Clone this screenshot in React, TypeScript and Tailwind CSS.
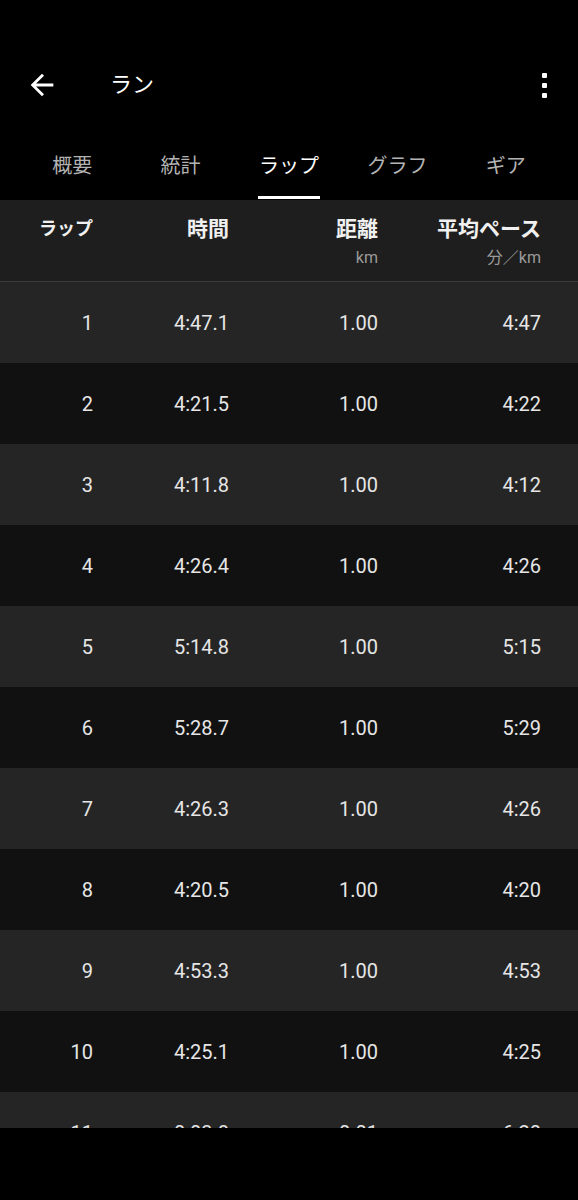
import React from "react";

const rows: [string, string, string, string][] = [
  ["1", "4:47.1", "1.00", "4:47"],
  ["2", "4:21.5", "1.00", "4:22"],
  ["3", "4:11.8", "1.00", "4:12"],
  ["4", "4:26.4", "1.00", "4:26"],
  ["5", "5:14.8", "1.00", "5:15"],
  ["6", "5:28.7", "1.00", "5:29"],
  ["7", "4:26.3", "1.00", "4:26"],
  ["8", "4:20.5", "1.00", "4:20"],
  ["9", "4:53.3", "1.00", "4:53"],
  ["10", "4:25.1", "1.00", "4:25"],
  ["11", "0:03.8", "0.01", "6:20"],
];

const tabs = ["概要", "統計", "ラップ", "グラフ", "ギア"];

export default function App() {
  return (
    <div
      className="w-[578px] h-[1200px] bg-black text-white overflow-hidden"
      style={{ fontFamily: "Roboto, 'Noto Sans CJK JP', sans-serif" }}
    >
      {/* toolbar */}
      <div className="h-[130px] pt-[60px]">
        <div className="flex items-center h-[50px] pl-[25px] pr-[31px]">
          <svg width="34" height="34" viewBox="0 0 24 24" className="shrink-0">
            <path fill="#fff" d="M20 11H7.83l5.59-5.59L12 4l-8 8 8 8 1.41-1.41L7.83 13H20v-2z" />
          </svg>
          <span className="ml-[51px] text-[22px] leading-none text-white">ラン</span>
          <div className="ml-auto flex flex-col gap-[5px]">
            <div className="w-[5px] h-[5px] bg-white rounded-[1px]" />
            <div className="w-[5px] h-[5px] bg-white rounded-[1px]" />
            <div className="w-[5px] h-[5px] bg-white rounded-[1px]" />
          </div>
        </div>
      </div>
      {/* tabs */}
      <div className="grid grid-cols-5 px-[18px] h-[70px]">
        {tabs.map((t, i) => (
          <div key={t} className="relative flex items-center justify-center pt-[2px]">
            <span
              className={
                "text-[20px] leading-none " +
                (i === 2 ? "text-white" : "text-[#b3b3b3]")
              }
            >
              {t}
            </span>
            {i === 2 && (
              <div className="absolute bottom-[1px] left-1/2 -translate-x-1/2 w-[62px] h-[3px] bg-white" />
            )}
          </div>
        ))}
      </div>
      {/* table */}
      <div className="h-[928px] overflow-hidden">
        <div className="bg-[#1e1e1e] h-[82px] border-b border-[#3c3c3c] grid grid-cols-[93px_136px_149px_163px]">
          <div className="text-right pt-[17px] text-[18px] font-bold leading-[24px] text-[#f0f0f0]">ラップ</div>
          <div className="text-right pt-[17px] text-[21px] font-bold leading-[24px] text-[#f0f0f0]">時間</div>
          <div className="pt-[17px] flex flex-col items-end">
            <span className="text-[21px] font-bold leading-[24px] text-[#f0f0f0]">距離</span>
            <span className="text-[16px] leading-[20px] mt-[7px] text-[#9a9a9a]">km</span>
          </div>
          <div className="pt-[17px] flex flex-col items-end">
            <span className="text-[21px] font-bold leading-[24px] text-[#f0f0f0]">平均ペース</span>
            <span className="text-[16px] leading-[20px] mt-[7px] text-[#9a9a9a]">分／km</span>
          </div>
        </div>
        {rows.map((r, i) => (
          <div
            key={r[0]}
            className={
              "h-[81px] grid grid-cols-[93px_136px_149px_163px] items-center text-[20px] text-[#e6e6e6] " +
              (i % 2 === 0 ? "bg-[#252525]" : "bg-[#111111]")
            }
          >
            <div className="text-right">{r[0]}</div>
            <div className="text-right">{r[1]}</div>
            <div className="text-right">{r[2]}</div>
            <div className="text-right">{r[3]}</div>
          </div>
        ))}
      </div>
    </div>
  );
}
